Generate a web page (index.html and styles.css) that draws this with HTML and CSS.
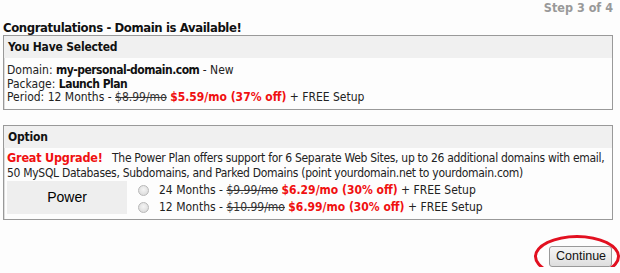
FILE: index.html
```html
<!DOCTYPE html>
<html lang="en">
<head>
  <meta charset="UTF-8" />
  <title>Domain Order - Step 3</title>
  <link rel="stylesheet" href="styles.css">
</head>
<body>
  <div class="step">Step 3 of 4</div>
  <h1>Congratulations - Domain is Available!</h1>

  <!-- selection summary -->
  <div class="box">
    <div class="box-head">You Have Selected</div>
    <div class="box-body summary">
      Domain: <b>my-personal-domain.com</b> - New<br>
      Package: <b>Launch Plan</b><br>
      Period: 12 Months - <s>$8.99/mo</s> <span class="deal">$5.59/mo (37% off)</span> + FREE Setup
    </div>
  </div>

  <!-- upgrade option -->
  <div class="box">
    <div class="box-head">Option</div>
    <div class="box-body">
      <div class="pitch"><span class="upgrade">Great Upgrade!</span>&nbsp;&nbsp; The Power Plan offers support for 6 Separate Web Sites, up to 26 additional domains with email,<br>50 MySQL Databases, Subdomains, and Parked Domains (point yourdomain.net to yourdomain.com)</div>
      <div class="plan-row">
        <div class="plan-name">Power</div>
        <div class="plan-terms">
          <label class="term"><span class="radio"></span><span>24 Months - <s>$9.99/mo</s> <span class="deal">$6.29/mo (30% off)</span> + FREE Setup</span></label>
          <label class="term"><span class="radio"></span><span>12 Months - <s>$10.99/mo</s> <span class="deal">$6.99/mo (30% off)</span> + FREE Setup</span></label>
        </div>
      </div>
    </div>
  </div>

  <div class="actions">
    <div class="circled">
      <button class="continue">Continue</button>
    </div>
  </div>
</body>
</html>
```

FILE: styles.css
```css
body {
  margin: 0;
  padding: 0 7px 0 3px;
  background-color: #fdfdfd;
  font-family: "DejaVu Sans Condensed", "DejaVu Sans", sans-serif;
  font-size: 12px;
  color: #222;
}
.step {
  text-align: right;
  font-weight: bold;
  font-size: 12.5px;
  color: #999;
  height: 21px;
  line-height: 15px;
}
h1 {
  font-size: 13px;
  margin: 0;
  line-height: 14px;
  letter-spacing: -0.4px;
  color: #111;
}
.box {
  border: 1px solid #999;
  box-shadow: inset 1px 1px 0 #ddd;
  background-color: #fdfdfd;
  margin-bottom: 15px;
}
.box-head {
  background-color: #f0f0f0;
  font-weight: bold;
  font-size: 12px;
  letter-spacing: -0.2px;
  line-height: 22px;
  padding: 0 4px;
  color: #111;
}
.box-body {
  padding: 3px 3px 3px 3px;
  line-height: 14px;
}
.summary {
  line-height: 13.5px;
  padding-top: 6px;
  padding-bottom: 4px;
}
.summary b {
  color: #111;
  letter-spacing: -0.5px;
}
s {
  color: #333;
}
.deal {
  color: #f01010;
  font-weight: bold;
}
.upgrade {
  color: #f01010;
  font-weight: bold;
  font-size: 12.5px;
  line-height: 12px;
  letter-spacing: -0.2px;
}
.pitch {
  line-height: 15px;
  letter-spacing: -0.3px;
  white-space: nowrap;
}
.plan-row {
  display: flex;
  margin-top: 0;
}
.plan-name {
  width: 120px;
  height: 33px;
  background-color: #eee;
  font-family: "Liberation Sans", Arial, sans-serif;
  font-size: 14px;
  color: #000;
  display: flex;
  align-items: center;
  justify-content: center;
  flex: none;
}
.plan-terms {
  display: flex;
  flex-direction: column;
  padding: 1px 0 0 11px;
}
.term {
  display: flex;
  align-items: center;
  height: 17px;
  white-space: nowrap;
}
.radio {
  width: 9px;
  height: 9px;
  border-radius: 50%;
  border: 1px solid #b8b8b8;
  background: radial-gradient(circle at 50% 40%, #f4f4f4, #d6d6d6);
  margin-right: 10px;
  flex: none;
}
.actions {
  display: flex;
  justify-content: flex-end;
  padding: 11px 1px 0 0;
}
.circled {
  position: relative;
}
.circled::after {
  content: "";
  position: absolute;
  left: -15px;
  right: -8px;
  top: -11px;
  bottom: -11px;
  border: 3px solid #e21020;
  border-radius: 50%;
}
.continue {
  font-family: "Liberation Sans", Arial, sans-serif;
  font-size: 12.5px;
  color: #111;
  padding: 0 6px;
  height: 21px;
  width: 63px;
  border: 1px solid #999;
  border-radius: 3px;
  background: linear-gradient(#f6f6f6, #dedede);
}
```
